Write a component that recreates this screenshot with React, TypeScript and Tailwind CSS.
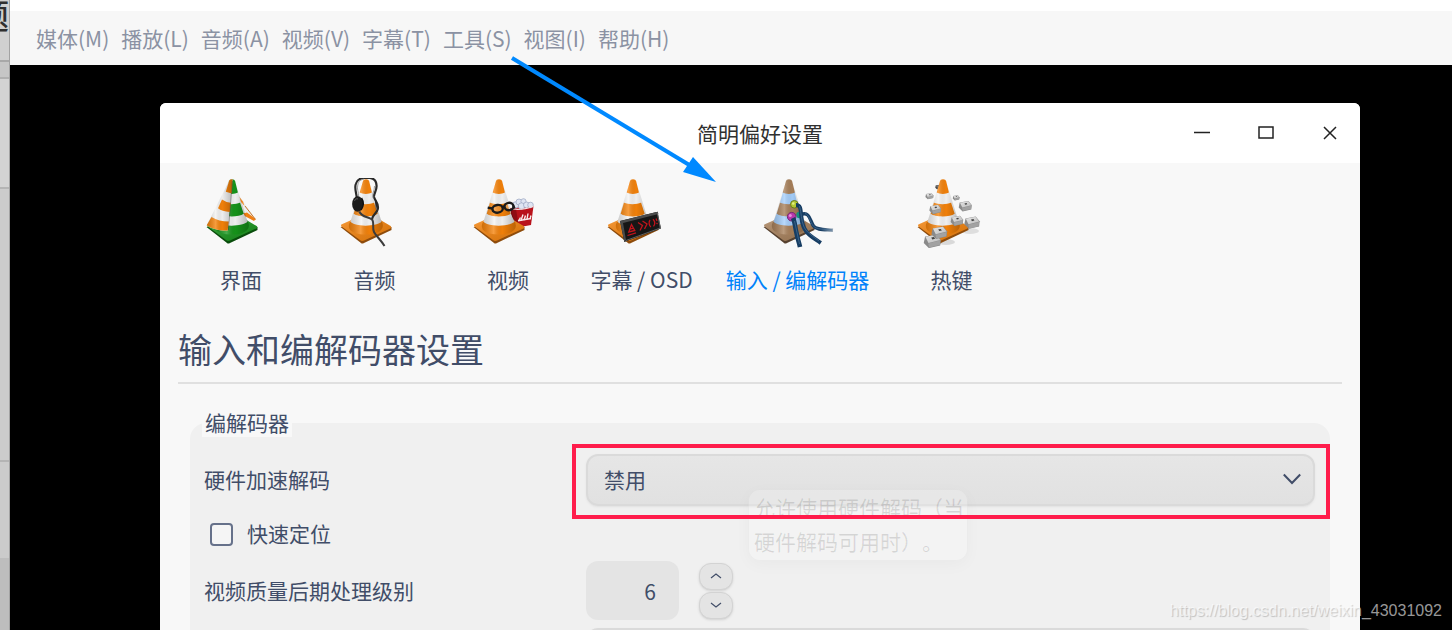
import type { ReactNode } from "react";

const font = "font-['Noto_Sans_CJK_SC',sans-serif]";

function Defs() {
  return (
    <svg width="0" height="0" className="absolute" aria-hidden="true">
      <defs>
        <linearGradient id="shade" x1="0" x2="1" y1="0" y2="0">
          <stop offset="0" stopColor="#000" stopOpacity="0.16" />
          <stop offset="0.35" stopColor="#fff" stopOpacity="0.22" />
          <stop offset="0.6" stopColor="#000" stopOpacity="0.02" />
          <stop offset="1" stopColor="#000" stopOpacity="0.24" />
        </linearGradient>
        <linearGradient id="plate" x1="0" x2="1" y1="0" y2="1">
          <stop offset="0" stopColor="#fff" stopOpacity="0.2" />
          <stop offset="1" stopColor="#000" stopOpacity="0.12" />
        </linearGradient>
        <linearGradient id="keyTop" x1="0" x2="1" y1="0" y2="1">
          <stop offset="0" stopColor="#e6e6e6" />
          <stop offset="1" stopColor="#bdbdbd" />
        </linearGradient>
        <linearGradient id="cable" gradientUnits="userSpaceOnUse" x1="40" x2="72" y1="40" y2="40">
          <stop offset="0.6" stopColor="#173d63" />
          <stop offset="1" stopColor="#173d63" stopOpacity="0.4" />
        </linearGradient>
      </defs>
    </svg>
  );
}

function Cone({ main, band, edge }: { main: string; band: string; edge: string }) {
  return (
    <g>
      <path d="M1.500 49 L22 65 Q23 66 25 65 L52.500 52 L52.500 49 L20 44 Z" fill={edge} />
      <path d="M2.400 46.600 L17 40 H38 L51.600 48 Q53 49.300 51.400 50.400 L25 62.600 Q22.800 63.600 21 62 L2.600 48.600 Q1.600 47.400 2.400 46.600 Z" fill={main} />
      <path d="M2.400 46.600 L17 40 H38 L51.600 48 Q53 49.300 51.400 50.400 L25 62.600 Q22.800 63.600 21 62 L2.600 48.600 Z" fill="url(#plate)" />
      <path d="M11 44 C8 49 10 56.500 26.500 56.500 C43 56.500 46 49 42.500 43 Z" fill={main} />
      <path d="M11 44 C8 49 10 56.500 26.500 56.500 C43 56.500 46 49 42.500 43 Z" fill="url(#shade)" />
      <path d="M14.700 35.500 L11.500 43.500 C15 49 38 49 42.500 43.500 L38.500 35.500 Z" fill={band} />
      <path d="M18 24.500 L14.700 35.800 C19 39.300 34 39.300 38.700 35.800 L35 24.500 Z" fill={main} />
      <path d="M21 14 L18 24.600 C22 26.800 31 26.800 35 24.600 L32.600 14 Z" fill={band} />
      <path d="M24 3 Q24.300 1.300 27 1.300 Q29.700 1.300 30.100 3 L32.900 14.600 C30 16.400 23.500 16.400 20.700 14.600 Z" fill={main} />
      <path d="M24 3 Q24.300 1.300 27 1.300 Q29.700 1.300 30.100 3 L42.500 43.500 C38 49 15 49 11.500 43.500 Z" fill="url(#shade)" />
    </g>
  );
}

const orange = { main: "#f58209", band: "#f4f4f4", edge: "#8e4c0c" };

function Key({ x, y, s, dark = false }: { x: number; y: number; s: number; dark?: boolean }) {
  return (
    <g transform={`translate(${x} ${y}) scale(${s / 6})`}>
      <path d="M-5.500 -3.500 L3.500 -5.200 L7 -1 L6.500 3.500 L-2.500 5.600 L-6.500 1.500 Z" fill={dark ? "#3a3a3a" : "#8a8a8a"} />
      <path d="M-3 2 L6.600 -0.500 L6.200 3.200 L-2.300 5.200 Z" fill={dark ? "#555" : "#a2a2a2"} />
      <path d="M-5.200 -3.400 L3.400 -5 L6.600 -0.800 L-2.800 1.500 Z" fill={dark ? "#777" : "url(#keyTop)"} />
      <path d="M-0.600 -2.700 L1.600 -3.100 L2.400 -1.700 L0.200 -1.200 Z" fill="#444" />
    </g>
  );
}

function IconFrame({ children }: { children: ReactNode }) {
  return (
    <svg width="72" height="70" viewBox="0 0 72 70" fill="none" aria-hidden="true">
      {children}
    </svg>
  );
}

function InterfaceIcon() {
  return (
    <IconFrame>
      <path d="M30 12 L50.700 41 L48 42 L38 38 Z" fill="#eee" />
      <path d="M34.500 19 L38 23.500 L39.500 28 L36 24 Z" fill="#f08a25" />
      <path d="M36 36 L42 34.500 L50.700 41 L49 43 Z" fill="#f07f14" />
      <path d="M40 28 L50.500 41.500" stroke="#c5772c" strokeWidth="1" />
      <Cone main="#16951a" band="#f4f4f4" edge="#0a4d0c" />
      <path d="M24.300 2.500 Q25 1.300 27.500 1.300 L22.700 52.500 C14 52.800 6 50.500 1.700 47.200 Z" fill="#f3f3f3" />
      <path d="M24.300 2.500 Q25 1.300 27.500 1.300 L26.800 15.500 L20.800 13.700 Z" fill="#f58209" />
      <path d="M17 21.500 Q21 24.500 25.800 24.700 L24.800 34 Q17 33.500 13 30.300 Z" fill="#f58209" />
      <path d="M6.500 39 Q14 43.500 23.800 43.500 L22.700 52.500 C14 52.800 6 50.500 1.700 47.200 Z" fill="#f58209" />
      <path d="M24.300 2.500 Q25 1.300 27.500 1.300 L22.700 52.500 C14 52.800 6 50.500 1.700 47.200 Z" fill="url(#shade)" />
      <path d="M27.400 3 L23.400 52" stroke="#333" strokeOpacity="0.5" strokeWidth="0.900" />
    </IconFrame>
  );
}

function AudioIcon() {
  return (
    <IconFrame>
      <Cone {...orange} />
      <path d="M18 22 C18 16 15 11 16.800 6 C18 1.500 21 0.500 24 0 H31 C35 0.500 37.500 3 37.600 8 C37.600 13 34.500 16 35 19 C36 23 40 25 38.800 31 C38 35 34 36 33 41" stroke="#2a2a2a" strokeWidth="2.200" />
      <path d="M19.500 19 C20 14 17.500 11 18.800 7 C19.500 3 22 1.500 25 1.200 M35.500 8 C35.500 13 33 15 34 20" stroke="#888" strokeWidth="0.800" />
      <ellipse cx="18.700" cy="26" rx="5.600" ry="7.700" fill="#1c1c1c" />
      <path d="M22.500 20 C25 24 25 28 22 32" stroke="#111" strokeWidth="1.500" />
      <path d="M35.500 20 C38.500 23 38.500 28 37 32 Z" fill="#222" />
      <path d="M15.500 23 C16 20.500 18 20.500 19 21" stroke="#666" strokeWidth="0.800" />
      <path d="M20.300 33.500 C23 39.500 29 38.500 33 41.500 C35.500 44 33 50 35 54 C37 58 42 62 45.500 68" stroke="#3c3c3c" strokeWidth="2" />
    </IconFrame>
  );
}

function VideoIcon() {
  return (
    <IconFrame>
      <path d="M38 30 L61.500 28 L59 47 L43 50 Z" fill="#b9121b" />
      <path d="M38 30 L42 49.500 L47 49 L44 31 Z" fill="#8e0c14" />
      <g stroke="#f7eaea" strokeWidth="1.400">
        <path d="M46.500 43 L48.500 39.500 M49 42.500 L51 36.500 M52 42 L53.500 37.500 M55 41.500 L56 35.500 M58 41 L59 37.500" />
        <path d="M46 42.800 L59 40.500" />
      </g>
      <g fill="#dfe5f2" stroke="#98a4c0" strokeWidth="0.700">
        <circle cx="43.500" cy="27" r="3.200" />
        <circle cx="47" cy="24" r="3" />
        <circle cx="51.500" cy="23.300" r="2.600" />
        <circle cx="49.500" cy="28" r="3.200" />
        <circle cx="54.500" cy="27" r="3" />
        <circle cx="58.500" cy="27" r="2.800" />
      </g>
      <path d="M41 31 Q50 32.500 61.500 28.200" stroke="#f5dede" strokeWidth="1.200" />
      <Cone {...orange} />
      <g stroke="#1b1b1b" strokeWidth="2.400">
        <ellipse cx="25.600" cy="30.800" rx="5.200" ry="3.900" fill="#fff" fillOpacity="0.12" transform="rotate(-8 25.600 30.800)" />
        <ellipse cx="37" cy="28.500" rx="4.500" ry="3.700" fill="#fff" fillOpacity="0.3" transform="rotate(-8 37 28.500)" />
        <path d="M30.500 29.500 Q31.500 28 32.800 28.800 M20.500 30.500 L15.700 29.600 M41.300 28 L42.500 30.500" />
      </g>
    </IconFrame>
  );
}

function SubtitleIcon() {
  return (
    <IconFrame>
      <Cone {...orange} />
      <path d="M14 43 L51.500 33.800 L55 50.500 L18.300 64 Z" fill="#161616" />
      <path d="M14 43 L51.500 33.800 L52.500 36 L17 45 L20 62 L18.300 64 Z" fill="#4b4b4b" />
      <path d="M51.300 35 L54.300 50 L20 62.500" stroke="#6a6a6a" strokeWidth="0.900" />
      <g stroke="#c0141c" strokeWidth="1.300">
        <path d="M21.500 57.500 L30 54.800 M22.800 54 L25.500 46.500 L28.800 52.500 Z M24 51 L27.500 50" />
        <path d="M32 44.500 L36.500 47.500 L34 52.500 M36.500 43 L41 46 L38.500 51" />
        <path d="M44 42 C42.500 44 43 48 45 49 M47 41.300 C49 43.500 49 46.500 47.500 48.300 M50 40.500 L51 43 M50.500 45 L51.500 46" />
      </g>
    </IconFrame>
  );
}

function CodecIcon() {
  return (
    <IconFrame>
      <Cone main="#a8805a" band="#a5cffc" edge="#57412f" />
      <circle cx="37.500" cy="37" r="3.200" fill="#15917a" />
      <circle cx="32.300" cy="26.300" r="3.800" fill="#b3c832" stroke="#687b1c" strokeWidth="1" />
      <circle cx="29.700" cy="38.700" r="4.300" fill="#b838ab" stroke="#762872" strokeWidth="1" />
      <circle cx="31.300" cy="25.500" r="1.300" fill="#e3ef85" />
      <circle cx="28.300" cy="37.500" r="1.500" fill="#e48edd" />
      <g stroke="url(#cable)" strokeWidth="4">
        <path d="M39 36.500 C48 33 48 43 51.500 48 C54.500 52 62 51.500 71 52.300" strokeWidth="3.400" />
        <path d="M34 27 C39.500 27 38.500 33 39.500 40 C41 55 49 58 58.800 65" />
        <path d="M31 40 C33 44 33 49 34.500 55 C35.500 61 37 64 38 69" strokeWidth="4.600" />
      </g>
      <g stroke="#4a7398" strokeWidth="0.700">
        <path d="M43 35.500 C47 36 48 44 51.500 48.300 C55 51.700 62 51 70 52" />
        <path d="M37.500 28 C39.500 35 39 42 42 49 C45 55 51 58 57 63" />
        <path d="M32.500 43 C34.500 51 35.500 58 37.500 66" />
      </g>
    </IconFrame>
  );
}

function HotkeyIcon() {
  return (
    <IconFrame>
      <ellipse cx="54" cy="53" rx="9" ry="3" fill="#000" fillOpacity="0.1" />
      <ellipse cx="30" cy="64" rx="9" ry="3" fill="#000" fillOpacity="0.12" />
      <Key x={22} y={9} s={2.5} dark />
      <Cone {...orange} />
      <Key x={13.300} y={18} s={3.600} />
      <Key x={40} y={19.700} s={3} />
      <Key x={49} y={28} s={5.800} />
      <Key x={19} y={31.300} s={5.200} />
      <Key x={40.700} y={42.700} s={5.600} />
      <Key x={55.700} y={44.500} s={6.800} />
      <Key x={16} y={63} s={7.600} />
      <Key x={23} y={54.500} s={7} />
    </IconFrame>
  );
}

const menus = ["媒体(M)", "播放(L)", "音频(A)", "视频(V)", "字幕(T)", "工具(S)", "视图(I)", "帮助(H)"];

const tabs = [
  { label: "界面", icon: <InterfaceIcon />, width: "w-[134px]" },
  { label: "音频", icon: <AudioIcon />, width: "w-[133px]" },
  { label: "视频", icon: <VideoIcon />, width: "w-[134px]" },
  { label: "字幕 / OSD", icon: <SubtitleIcon />, width: "w-[133px]" },
  { label: "输入 / 编解码器", icon: <CodecIcon />, width: "w-[179px]", active: true },
  { label: "热键", icon: <HotkeyIcon />, width: "w-[129px]" },
];

function BackgroundStrip() {
  return (
    <div className="flex w-[10px] shrink-0 flex-col overflow-hidden border-r border-[#a2a2a2] bg-[#d3d3d3]">
      <div className="flex h-[62px] shrink-0 justify-end overflow-hidden border-b-2 border-[#a8a8a8] bg-[#d0d0d0]">
        <span className="text-[34px] leading-[30px] font-medium text-[#2f2f2f]">题</span>
      </div>
      <div className="h-[17px] shrink-0 border-b-2 border-[#b0b0b0] bg-[#c6c6c6]" />
      <div className="h-[110px] shrink-0 border-b-2 border-[#b4b4b4] bg-[#d3d3d3]" />
      <div className="h-[273px] shrink-0 border-b-2 border-[#b4b4b4] bg-[#cccccc]" />
      <div className="h-[96px] shrink-0 bg-[#cbcbcb]" />
      <div className="grow bg-[#bdbdbd]" />
    </div>
  );
}

function ComboBox({ id, label, value }: { id: string; label?: string; value: string }) {
  return (
    <div className="relative">
      <select
        id={id}
        aria-label={label}
        defaultValue={value}
        className="block h-[52px] w-full appearance-none rounded-xl border-2 border-[#dadada] bg-linear-to-b from-[#e6e6e6] to-[#e1e1e1] px-4 pb-[2px] text-[21px] text-[#414d68] shadow-sm shadow-black/5 outline-none"
      >
        <option>{value}</option>
      </select>
      <svg className="pointer-events-none absolute top-[18px] right-[14px]" width="18" height="14" viewBox="0 0 18 14" fill="none" aria-hidden="true">
        <path d="M0.800 2.500 L9 11 L17.200 2.500" stroke="#414d68" strokeWidth="2" />
      </svg>
    </div>
  );
}

function StepButton({ label, d }: { label: string; d: string }) {
  return (
    <button aria-label={label} className="flex h-[27px] w-[34px] items-center justify-center rounded-xl border border-[#d3d3d3] bg-[#e4e4e4] shadow-sm shadow-black/10">
      <svg width="12" height="6" viewBox="0 0 12 6" fill="none" aria-hidden="true">
        <path d={d} stroke="#414d68" strokeWidth="1.200" />
      </svg>
    </button>
  );
}

function CodecGroup() {
  return (
    <fieldset className="mx-[30px] rounded-2xl bg-[#f0f0f0] pr-[15px] pl-[14px]">
      <legend className="-ml-[2px] h-7 bg-[#f8f8f8] px-[3px] leading-[26px]">编解码器</legend>
      <div className="mt-[17px] grid grid-cols-[382px_1fr] items-center">
        <label htmlFor="hw" className="pb-[2px]">硬件加速解码</label>
        <div className="relative">
          <ComboBox id="hw" value="禁用" />
          <div role="tooltip" className="absolute top-[35px] left-[162px] w-[220px] rounded-xl border border-black/3 bg-white/20 pb-[2px] pl-[5px] leading-[34px] whitespace-nowrap text-black/12 shadow-[0_4px_16px_rgba(0,0,0,0.03)] [text-spacing-trim:space-all]">
            允许使用硬件解码（当
            <br />
            硬件解码可用时）。
          </div>
          <div className="pointer-events-none absolute -top-[10px] -right-[15px] -bottom-[13px] -left-[14px] border-4 border-[#ff1c4b]" />
        </div>
      </div>
      <label className="mt-[12px] ml-[6px] flex h-8 items-center gap-[14px]">
        <input type="checkbox" className="size-[23px] appearance-none rounded-sm border-2 border-[#66718a] bg-[#f5f5f5]" />
        <span className="pb-[2px]">快速定位</span>
      </label>
      <div className="mt-[11px] grid grid-cols-[382px_1fr] items-center">
        <label htmlFor="level" className="pb-[2px]">视频质量后期处理级别</label>
        <div className="flex items-center gap-5">
          <input id="level" defaultValue="6" className="h-[59px] w-[93px] rounded-xl bg-[#e4e4e4] pr-[23px] text-right outline-none" />
          <div className="flex flex-col gap-[2px]">
            <StepButton label="增加" d="M1 5 L6 1 L11 5" />
            <StepButton label="减少" d="M1 1 L6 5 L11 1" />
          </div>
        </div>
      </div>
      <div className="mt-2 ml-[382px]">
        <ComboBox id="next" label="编解码器选项" value="" />
      </div>
    </fieldset>
  );
}

function PreferencesDialog() {
  return (
    <section aria-label="简明偏好设置" className="overflow-hidden rounded-t-md bg-[#f8f8f8] text-[#414d68]">
      <header className="grid h-[60px] grid-cols-[1fr_auto_1fr] items-center bg-white">
        <h1 className="col-start-2 text-[#303030]">简明偏好设置</h1>
        <div className="flex justify-end text-[#222]">
          {[
            { label: "最小化", d: "M2 9.500 H18" },
            { label: "最大化", d: "M3 4 H17 V15 H3 Z" },
            { label: "关闭", d: "M4 4 L16 16 M16 4 L4 16" },
          ].map((b) => (
            <button key={b.label} aria-label={b.label} className="flex h-[60px] w-16 items-center justify-center pl-1">
              <svg width="20" height="20" viewBox="0 0 20 20" fill="none" stroke="currentColor" strokeWidth="1.500" aria-hidden="true">
                <path d={b.d} />
              </svg>
            </button>
          ))}
        </div>
      </header>
      <nav className="flex pt-[15px] pl-[14px]">
        {tabs.map((t) => (
          <button key={t.label} className={`flex shrink-0 flex-col items-center whitespace-nowrap ${t.width} ${t.active ? "text-[#0082fa]" : ""}`}>
            {t.icon}
            <span className="mt-4 leading-[30px]">{t.label}</span>
          </button>
        ))}
      </nav>
      <h2 className="mx-[18px] mt-8 mb-[25px] border-b-2 border-[#e0e0e0] pb-[11px] text-[34px] leading-[45px]">输入和编解码器设置</h2>
      <CodecGroup />
    </section>
  );
}

export default function App() {
  return (
    <div lang="zh-CN" className={`relative flex h-screen overflow-hidden bg-black text-[21px] leading-[30px] ${font}`}>
      <Defs />
      <BackgroundStrip />
      <div className="flex min-w-0 grow flex-col">
        <div className="h-[11px] shrink-0 bg-white" />
        <nav className="flex h-[54px] shrink-0 items-center gap-3 bg-[#f7f7f7] pl-[26px] text-[#8b92a3]">
          {menus.map((m) => (
            <button key={m} className="whitespace-nowrap">{m}</button>
          ))}
        </nav>
        <main className="grow overflow-hidden bg-black pt-[38px] pr-[92px] pl-[150px]">
          <PreferencesDialog />
        </main>
      </div>
      <svg className="pointer-events-none absolute top-[50px] left-[505px]" width="220" height="140" viewBox="0 0 220 140" aria-hidden="true">
        <path d="M7 8 L186 116" stroke="#0089ff" strokeWidth="4" />
        <path d="M188 107 L211 132 L178 122 Z" fill="#0089ff" />
      </svg>
      <div className="pointer-events-none absolute right-[10px] bottom-[7px] font-['Liberation_Sans',sans-serif] text-[16px] leading-[24px] text-white/60 [text-shadow:1px_1px_1px_rgba(0,0,0,0.2)]">
        https://blog.csdn.net/weixin_43031092
      </div>
    </div>
  );
}
